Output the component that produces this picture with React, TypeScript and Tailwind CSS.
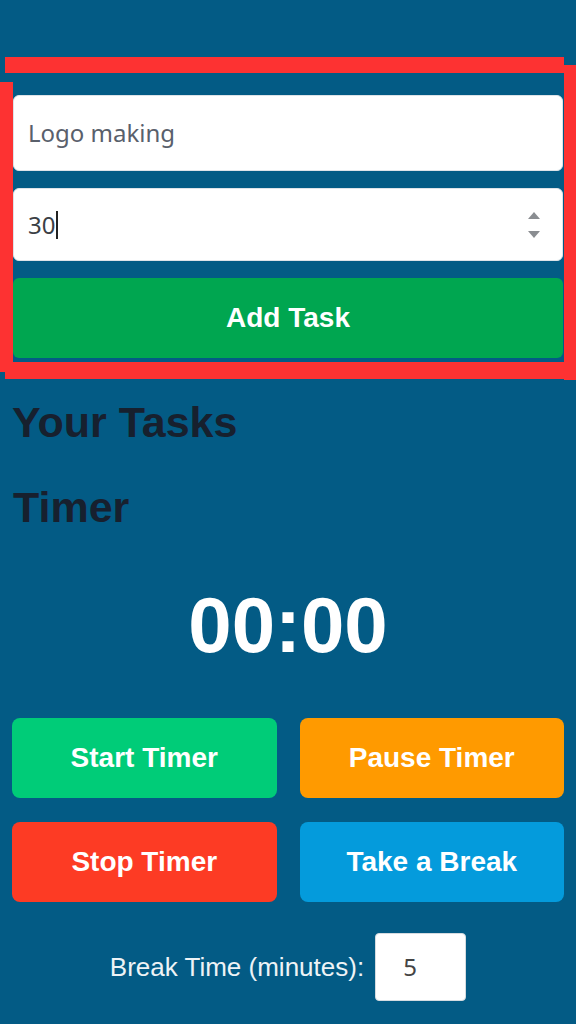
import React from "react";

const timerButtons = [
  { label: "Start Timer", cls: "bg-[#00cc78]" },
  { label: "Pause Timer", cls: "bg-[#ff9a00]" },
  { label: "Stop Timer", cls: "bg-[#fd3b24]" },
  { label: "Take a Break", cls: "bg-[#049bdc]" },
];

export default function App() {
  return (
    <div className="relative min-h-screen w-full overflow-hidden bg-[#035b85] font-['Liberation_Sans',Arial,sans-serif]">
      {/* task form */}
      <div className="flex flex-col px-[13px] pt-[95px]">
        <div className="flex h-[76px] items-center rounded-[6px] border border-[#dde3e8] bg-white pl-[14px] font-['Noto_Sans',sans-serif] text-[24px] text-[#59606b]">
          Logo making
        </div>
        <div className="mt-[17px] flex h-[73px] items-center rounded-[6px] border border-[#dde3e8] bg-white pl-[14px] pr-[20px] font-['Noto_Sans',sans-serif] text-[24px] text-[#3b3f45]">
          <span>30</span>
          <span className="ml-[1px] h-[28px] w-[2px] bg-[#222]" />
          <svg className="ml-auto" width="16" height="30" viewBox="0 0 16 30">
            <path d="M2 9 L8 2 L14 9 Z" fill="#8a8d91" />
            <path d="M2 21 L8 28 L14 21 Z" fill="#8a8d91" />
          </svg>
        </div>
        <button className="mt-[17px] h-[80px] rounded-[6px] bg-[#00a650] text-[28px] font-bold text-white">
          Add Task
        </button>
      </div>

      <h2 className="mt-[40px] px-[12px] text-[43px] font-bold leading-[49px] text-[#17202e]">Your Tasks</h2>
      <h2 className="mt-[36px] px-[13px] text-[43px] font-bold leading-[49px] text-[#17202e]">Timer</h2>

      <div className="mt-[55px] text-center text-[78px] font-bold leading-[77px] text-white">00:00</div>

      <div className="mt-[54px] grid grid-cols-2 gap-x-[23px] gap-y-[24px] px-[12px]">
        {timerButtons.map((b) => (
          <button key={b.label} className={`h-[80px] rounded-[8px] text-[28px] font-bold text-white ${b.cls}`}>
            {b.label}
          </button>
        ))}
      </div>

      <div className="mt-[31px] flex items-center justify-center gap-[11px]">
        <span className="text-[26px] text-[#eef3f6]">Break Time (minutes):</span>
        <div className="flex h-[68px] w-[91px] items-center rounded-[4px] border border-[#d5dbe0] bg-white pl-[27px] font-['Noto_Sans',sans-serif] text-[24px] text-[#444]">
          5
        </div>
      </div>

      {/* red highlight drawn over the form */}
      <div className="pointer-events-none absolute left-[5px] top-[57px] h-[16px] w-[559px] bg-[#fd3232]" />
      <div className="pointer-events-none absolute left-[564px] top-[65px] h-[315px] w-[12px] bg-[#fd3232]" />
      <div className="pointer-events-none absolute left-0 top-[82px] h-[290px] w-[13px] bg-[#fd3232]" />
      <div className="pointer-events-none absolute left-[5px] top-[362px] h-[17px] w-[571px] bg-[#fd3232]" />
    </div>
  );
}
